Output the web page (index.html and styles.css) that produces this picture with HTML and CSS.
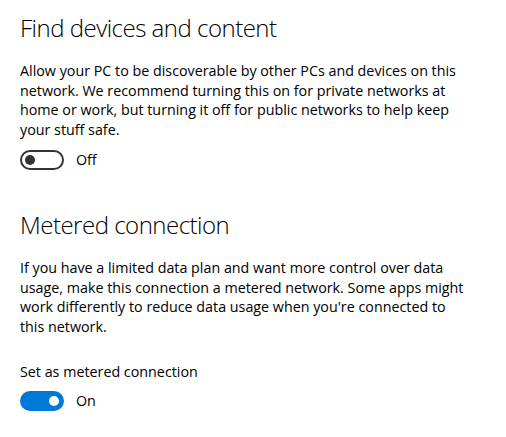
FILE: index.html
```html
<!DOCTYPE html>
<html lang="en">
<head>
<meta charset="utf-8">
<title>Network settings</title>
<link rel="stylesheet" href="styles.css">
</head>
<body>
<main class="page">
  <section class="section">
    <h2 class="title">Find devices and content</h2>
    <p class="desc">Allow your PC to be discoverable by other PCs and devices on this network. We recommend turning this on for private networks at home or work, but turning it off for public networks to help keep your stuff safe.</p>
    <div class="toggle-row">
      <span class="toggle toggle-off"><span class="knob"></span></span>
      <span class="toggle-label">Off</span>
    </div>
  </section>
  <section class="section section-metered">
    <h2 class="title">Metered connection</h2>
    <p class="desc">If you have a limited data plan and want more control over data usage, make this connection a metered network. Some apps might work differently to reduce data usage when you're connected to this network.</p>
    <div class="field-label">Set as metered connection</div>
    <div class="toggle-row toggle-row-labelled">
      <span class="toggle toggle-on"><span class="knob"></span></span>
      <span class="toggle-label">On</span>
    </div>
  </section>
</main>
</body>
</html>
```
FILE: styles.css
```css
html, body {
  margin: 0;
  padding: 0;
  background: #ffffff;
}
body {
  font-family: "Open Sans", "Noto Sans", "Liberation Sans", sans-serif;
  color: #000000;
  width: 506px;
  height: 437px;
  overflow: hidden;
}
.page {
  padding: 12px 20px 0 20px;
  width: 445px;
}
.section {
  display: flex;
  flex-direction: column;
}
.section-metered {
  margin-top: 39px;
}
.title {
  margin: 0;
  font-size: 24px;
  font-weight: 300;
  letter-spacing: -0.5px;
  line-height: 32px;
  white-space: nowrap;
}
.desc {
  margin: 17px 0 0 0;
  font-size: 14.3px;
  line-height: 19.5px;
}
.field-label {
  margin-top: 26px;
  font-size: 14.3px;
  line-height: 20px;
}
.toggle-row {
  margin-top: 11px;
  display: flex;
  align-items: center;
  gap: 12px;
}
.toggle-row-labelled {
  margin-top: 9px;
}
.toggle {
  box-sizing: border-box;
  width: 44px;
  height: 20px;
  border-radius: 10px;
  border: 2px solid #333333;
  display: flex;
  align-items: center;
  padding: 0 3px;
}
.toggle .knob {
  width: 10px;
  height: 10px;
  border-radius: 50%;
  background: #333333;
}
.toggle-on {
  background: #0078d7;
  border-color: #0078d7;
  justify-content: flex-end;
}
.toggle-on .knob {
  background: #ffffff;
}
.toggle-label {
  font-size: 14.3px;
  line-height: 20px;
}
```
